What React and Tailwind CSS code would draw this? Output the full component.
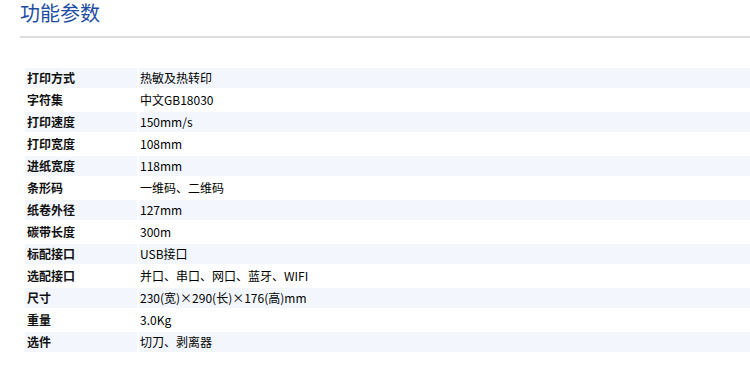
const specs = [
  ['打印方式', '热敏及热转印'],
  ['字符集', '中文GB18030'],
  ['打印速度', '150mm/s'],
  ['打印宽度', '108mm'],
  ['进纸宽度', '118mm'],
  ['条形码', '一维码、二维码'],
  ['纸卷外径', '127mm'],
  ['碳带长度', '300m'],
  ['标配接口', 'USB接口'],
  ['选配接口', '并口、串口、网口、蓝牙、WIFI'],
  ['尺寸', '230(宽)×290(长)×176(高)mm'],
  ['重量', '3.0Kg'],
  ['选件', '切刀、剥离器'],
];

const App = () => {
  return (
    <div className="w-[750px] h-[371px] overflow-hidden bg-white font-['Noto_Sans_CJK_SC',sans-serif]">
      <div className="pl-[20px]">
        <h2 className="text-[20px] leading-[26px] text-[#1e4ea3]">功能参数</h2>
        <div className="mt-[10px] h-[2px] bg-[#dddddd]" />
      </div>

      <table className="ml-[23px] mt-[28px] w-[760px] border-separate border-spacing-[2px] text-[12px] text-black">
        <tbody>
          {specs.map(([label, value], i) => (
            <tr key={label} className={i % 2 === 0 ? 'bg-[#f3f7fd]' : ''}>
              <td className="w-[112px] h-[20px] p-0 pl-[2px] font-bold leading-[20px] text-[#111]">
                {label}
              </td>
              <td className="h-[20px] p-0 pl-[1px] leading-[20px]">{value}</td>
            </tr>
          ))}
        </tbody>
      </table>
    </div>
  );
};

export default App;
